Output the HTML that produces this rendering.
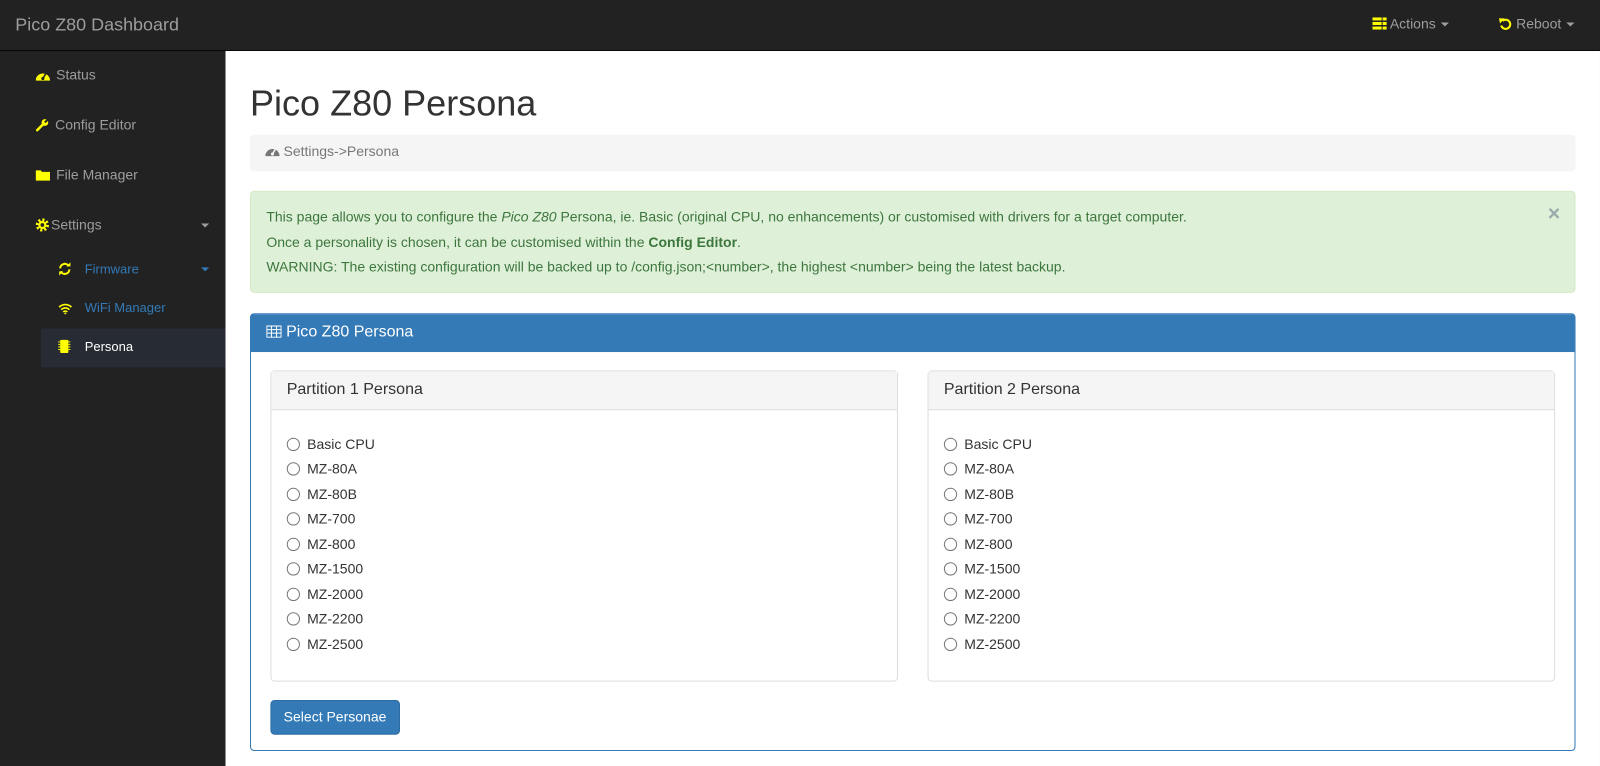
<!DOCTYPE html>
<html><head><style>
*{box-sizing:border-box}
html,body{margin:0;width:1600px;height:766px;overflow:hidden;background:#222}
#w{position:absolute;left:0;top:0;width:1568px;height:751px;transform:scale(1.0204);transform-origin:0 0;font-family:"Liberation Sans",sans-serif;font-size:13.72px;color:#333}
.top{position:absolute;left:0;top:0;width:1568px;height:50px;background:#222;border-bottom:1px solid #080808}
.brand{position:absolute;left:15px;top:14px;font-size:17.6px;color:#9d9d9d}
.tnav{position:absolute;top:16px;color:#9d9d9d;font-size:13.72px;white-space:nowrap}
.caret{display:inline-block;width:0;height:0;border-left:4px solid transparent;border-right:4px solid transparent;border-top:4px solid currentColor;vertical-align:middle;margin-left:5px}
.side{position:absolute;left:0;top:51px;width:221px;height:700px;background:#222}
.si{position:absolute;color:#9d9d9d;font-size:13.72px;white-space:nowrap}
.si svg{vertical-align:-2px;margin-right:6px}
.main{position:absolute;left:221px;top:50px;width:1347px;height:701px;background:#fff}
h1{position:absolute;left:24px;top:32px;margin:0;font-size:35.3px;font-weight:500;color:#333}
.bc{position:absolute;left:24px;top:82px;width:1299px;height:36px;background:#f5f5f5;border-radius:4px;padding:9px 15px;color:#777}
.alert{position:absolute;left:24px;top:137px;width:1299px;height:100px;background:#dff0d8;border:1px solid #d6e9c6;border-radius:4px;color:#3c763d;padding:13px 15px;line-height:24.5px}
.x{position:absolute;right:14px;top:10px;font-size:20.6px;color:#9aa;font-weight:bold}
.panel{position:absolute;left:24px;top:257px;width:1299px;height:429px;border:1px solid #337ab7;border-radius:4px}
.ph{height:37px;background:#337ab7;color:#fff;font-size:15.7px;padding:9px 15px}
.sub{position:absolute;top:55px;width:615px;height:305px;border:1px solid #ddd;border-radius:4px}
.sh{height:38px;background:#f5f5f5;border-bottom:1px solid #ddd;font-size:15.7px;padding:9px 15px;color:#333}
.opts{padding:21px 15px}
.o{height:24.5px;display:flex;align-items:center}
.o i{width:13px;height:13px;border:1px solid #767676;border-radius:50%;margin-right:7px;margin-left:0}
.btn{position:absolute;left:19px;top:378px;height:34px;background:#337ab7;border:1px solid #2e6da4;border-radius:4px;color:#fff;padding:8px 12px;white-space:nowrap}
</style></head><body><div id="w">
<div class="top"><div class="brand">Pico Z80 Dashboard</div>
<div class="tnav" style="left:1345px"><svg width="14" height="12" style="vertical-align:-1px"><rect x="0" y="0" width="14" height="3" fill="#ff0"/><rect x="0" y="4.5" width="14" height="3" fill="#ff0"/><rect x="0" y="9" width="14" height="3" fill="#ff0"/><rect x="9" y="0" width="1" height="12" fill="#222"/></svg> Actions<span class="caret"></span></div>
<div class="tnav" style="left:1469px"><svg width="13" height="13" style="vertical-align:-2px"><path d="M3.5 3.5A4.5 4.5 0 1 1 2.2 8" fill="none" stroke="#ff0" stroke-width="2"/><path d="M0 1L5.5 1L1 6Z" fill="#ff0"/></svg> Reboot<span class="caret"></span></div>
</div>
<div class="side">
<div class="si" style="left:35px;top:15px"><svg width="14" height="12"><path d="M0 11A7 7 0 0 1 14 11Z" fill="#ff0"/><circle cx="7" cy="9" r="1.5" fill="#222"/><path d="M7 9L10 4" stroke="#222" stroke-width="1.5"/></svg>Status</div>
<div class="si" style="left:35px;top:64px"><svg width="13" height="13"><path d="M1.5 11.5L7 6" stroke="#ff0" stroke-width="2.5" stroke-linecap="round"/><circle cx="9" cy="4" r="3.3" fill="#ff0"/><path d="M9 4L13 0" stroke="#222" stroke-width="2"/></svg>Config Editor</div>
<div class="si" style="left:35px;top:113px"><svg width="14" height="12"><path d="M0 1H5L6 2.5H14V11H0Z" fill="#ff0"/></svg>File Manager</div>
<div class="si" style="left:35px;top:162px"><svg width="13" height="13" style="margin-right:2px"><circle cx="6.5" cy="6.5" r="5" fill="none" stroke="#ff0" stroke-width="3" stroke-dasharray="2 1.9"/><circle cx="6.5" cy="6.5" r="4" fill="#ff0"/><circle cx="6.5" cy="6.5" r="1.8" fill="#222"/></svg>Settings</div>
<div class="si" style="left:192px;top:162px"><span class="caret"></span></div>
<div class="si" style="left:57px;top:205px;color:#337ab7;font-size:12.74px"><svg width="13" height="13" style="margin-right:13px"><path d="M2 6A4.5 4.5 0 0 1 10.5 4" fill="none" stroke="#ff0" stroke-width="2"/><path d="M11 7A4.5 4.5 0 0 1 2.5 9" fill="none" stroke="#ff0" stroke-width="2"/><path d="M8 4H12V0Z M5 9H1V13Z" fill="#ff0"/></svg>Firmware</div>
<div class="si" style="left:192px;top:205px;color:#337ab7"><span class="caret"></span></div>
<div class="si" style="left:57px;top:243px;color:#337ab7;font-size:12.74px"><svg width="14" height="11" style="margin-right:12px"><path d="M1 4A8.5 8.5 0 0 1 13 4M3 6.5A5.5 5.5 0 0 1 11 6.5M5 8.8A2.5 2.5 0 0 1 9 8.8" fill="none" stroke="#ff0" stroke-width="1.6"/><circle cx="7" cy="10.2" r="1" fill="#ff0"/></svg>WiFi Manager</div>
<div style="position:absolute;left:40px;top:271px;width:181px;height:38px;background:#272b34"></div>
<div class="si" style="left:57px;top:281px;color:#fff;font-size:12.74px"><svg width="12" height="13" style="margin-right:14px"><rect x="2" y="0" width="8" height="13" rx="1" fill="#ff0"/><path d="M0 2H2M0 4.5H2M0 7H2M0 9.5H2M10 2H12M10 4.5H12M10 7H12M10 9.5H12" stroke="#ff0" stroke-width="1"/></svg>Persona</div>
</div>
<div class="main">
<h1>Pico Z80 Persona</h1>
<div class="bc"><svg width="14" height="12" style="vertical-align:-1px"><path d="M0 11A7 7 0 0 1 14 11Z" fill="#777"/><circle cx="7" cy="9" r="1.5" fill="#f5f5f5"/><path d="M7 9L10 4" stroke="#f5f5f5" stroke-width="1.5"/></svg> Settings-&gt;Persona</div>
<div class="alert"><span class="x">×</span>This page allows you to configure the <i>Pico Z80</i> Persona, ie. Basic (original CPU, no enhancements) or customised with drivers for a target computer.<br>Once a personality is chosen, it can be customised within the <b>Config Editor</b>.<br>WARNING: The existing configuration will be backed up to /config.json;&lt;number&gt;, the highest &lt;number&gt; being the latest backup.</div>
<div class="panel"><div class="ph"><svg width="15" height="12" style="vertical-align:-1px"><rect x="0.5" y="0.5" width="14" height="11" fill="none" stroke="#fff"/><path d="M0 4H15M0 7.5H15M5 0V12M10 0V12" stroke="#fff"/></svg> Pico Z80 Persona</div>
<div class="sub" style="left:19px"><div class="sh">Partition 1 Persona</div><div class="opts">
<div class="o"><i></i>Basic CPU</div><div class="o"><i></i>MZ-80A</div><div class="o"><i></i>MZ-80B</div><div class="o"><i></i>MZ-700</div><div class="o"><i></i>MZ-800</div><div class="o"><i></i>MZ-1500</div><div class="o"><i></i>MZ-2000</div><div class="o"><i></i>MZ-2200</div><div class="o"><i></i>MZ-2500</div></div></div>
<div class="sub" style="left:663px"><div class="sh">Partition 2 Persona</div><div class="opts">
<div class="o"><i></i>Basic CPU</div><div class="o"><i></i>MZ-80A</div><div class="o"><i></i>MZ-80B</div><div class="o"><i></i>MZ-700</div><div class="o"><i></i>MZ-800</div><div class="o"><i></i>MZ-1500</div><div class="o"><i></i>MZ-2000</div><div class="o"><i></i>MZ-2200</div><div class="o"><i></i>MZ-2500</div></div></div>
<div class="btn">Select Personae</div>
</div>
</div>
</div></body></html>
